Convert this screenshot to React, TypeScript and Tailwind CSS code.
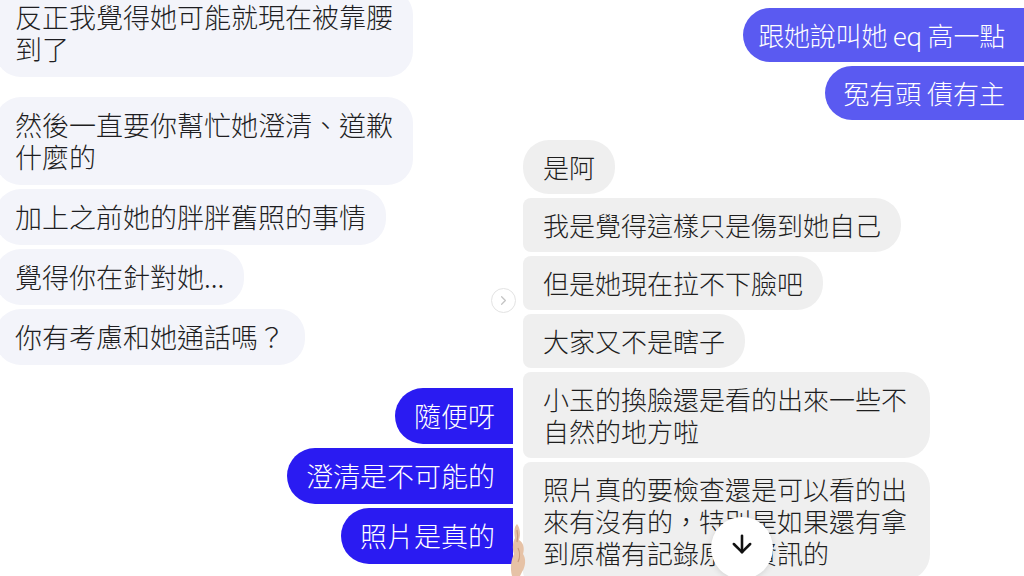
import { ArrowDown, ChevronRight } from "lucide-react";

const font = { fontFamily: '"Noto Sans CJK TC", "Noto Sans", sans-serif' };

type Msg = { lines: string[] };

const leftIn: Msg[] = [
  { lines: ["反正我覺得她可能就現在被靠腰", "到了"] },
  { lines: ["然後一直要你幫忙她澄清、道歉", "什麼的"] },
  { lines: ["加上之前她的胖胖舊照的事情"] },
  { lines: ["覺得你在針對她..."] },
  { lines: ["你有考慮和她通話嗎？"] },
];

const leftOut = ["隨便呀", "澄清是不可能的", "照片是真的"];

const rightOut = ["跟她說叫她 eq 高一點", "冤有頭 債有主"];

const rightIn: string[][] = [
  ["是阿"],
  ["我是覺得這樣只是傷到她自己"],
  ["但是她現在拉不下臉吧"],
  ["大家又不是瞎子"],
  ["小玉的換臉還是看的出來一些不", "自然的地方啦"],
  ["照片真的要檢查還是可以看的出", "來有沒有的，特別是如果還有拿", "到原檔有記錄原始資訊的"],
];

function Lines({ lines }: { lines: string[] }) {
  return (
    <>
      {lines.map((l, i) => (
        <div key={i} className="whitespace-nowrap">
          {l}
        </div>
      ))}
    </>
  );
}

function LeftPanel() {
  return (
    <div className="relative w-[513px] shrink-0 overflow-hidden bg-white">
      <div className="flex flex-col items-start gap-[4px] mt-[-11px]">
        {leftIn.map((m, i) => (
          <div
            key={i}
            className={`ml-[-5px] rounded-[26px] bg-[#f3f4fa] px-[20px] py-[12px] text-[27px] leading-[32px] text-[#1e1e22] ${
              i === 1 ? "mt-[16px]" : ""
            }`}
          >
            <Lines lines={m.lines} />
          </div>
        ))}
      </div>
      <div className="mt-[23px] flex flex-col items-end gap-[4px]">
        {leftOut.map((t, i) => (
          <div
            key={i}
            className="mr-[-2px] rounded-l-[28px] bg-[#2a1bf2] pl-[19px] pr-[20px] py-[12px] text-[27px] leading-[32px] text-white whitespace-nowrap"
          >
            {t}
          </div>
        ))}
      </div>
    </div>
  );
}

function RightPanel() {
  return (
    <div className="relative flex-1 overflow-hidden bg-white pt-[8px] pl-[10px]">
      <div className="flex flex-col items-end gap-[4px]">
        {rightOut.map((t, i) => (
          <div
            key={i}
            className={`rounded-l-[27px] bg-[#5a5af1] pr-[19px] py-[11px] text-[26px] leading-[32px] text-white whitespace-nowrap ${
              i === 0 ? "pl-[15px] tracking-[-0.2px]" : "pl-[18px]"
            }`}
          >
            {t}
          </div>
        ))}
      </div>
      <div className="mt-[20px] flex flex-col items-start gap-[4px]">
        {rightIn.map((lines, i) => (
          <div
            key={i}
            className={`bg-[#efefef] px-[20px] py-[11px] text-[26px] leading-[32px] text-[#1e1e1e] ${
              i === 0 ? "rounded-[26px]" : "rounded-r-[26px] rounded-l-[8px]"
            } ${lines.length > 1 ? "w-[407px]" : ""}`}
          >
            <Lines lines={lines} />
          </div>
        ))}
      </div>
    </div>
  );
}

export default function App() {
  return (
    <div className="relative flex h-[576px] w-[1024px] overflow-hidden bg-white font-light" style={font}>
      <LeftPanel />
      <RightPanel />

      {/* small pager chevron between the two shots */}
      <div className="absolute left-[491px] top-[288px] flex h-[25px] w-[25px] items-center justify-center rounded-full border border-[#e3e3e3] bg-white">
        <ChevronRight className="h-[15px] w-[15px] text-[#c4c4c4]" strokeWidth={2} />
      </div>

      {/* sticker peeking from the bottom */}
      <svg className="absolute left-[508px] top-[522px]" width="20" height="54" viewBox="0 0 20 54">
        <path d="M9 2 C12 6 13 12 11 18 C15 20 17 26 15 32 C18 36 18 44 14 50 L12 54 L4 54 C2 46 3 38 6 32 C4 26 5 20 7 16 C6 10 6 5 9 2 Z" fill="#e6c2a6" />
        <path d="M9 8 C10 12 10 16 9 20 M10 26 C12 30 12 36 10 40" stroke="#c99a7c" strokeWidth="1.2" fill="none" />
      </svg>

      {/* scroll to bottom button */}
      <div className="absolute left-[711px] top-[517px] flex h-[62px] w-[62px] items-start justify-center rounded-full bg-white pt-[13px] shadow-[0_1px_6px_rgba(0,0,0,0.12)]">
        <ArrowDown className="h-[28px] w-[28px] text-[#111]" strokeWidth={2.2} />
      </div>
    </div>
  );
}
